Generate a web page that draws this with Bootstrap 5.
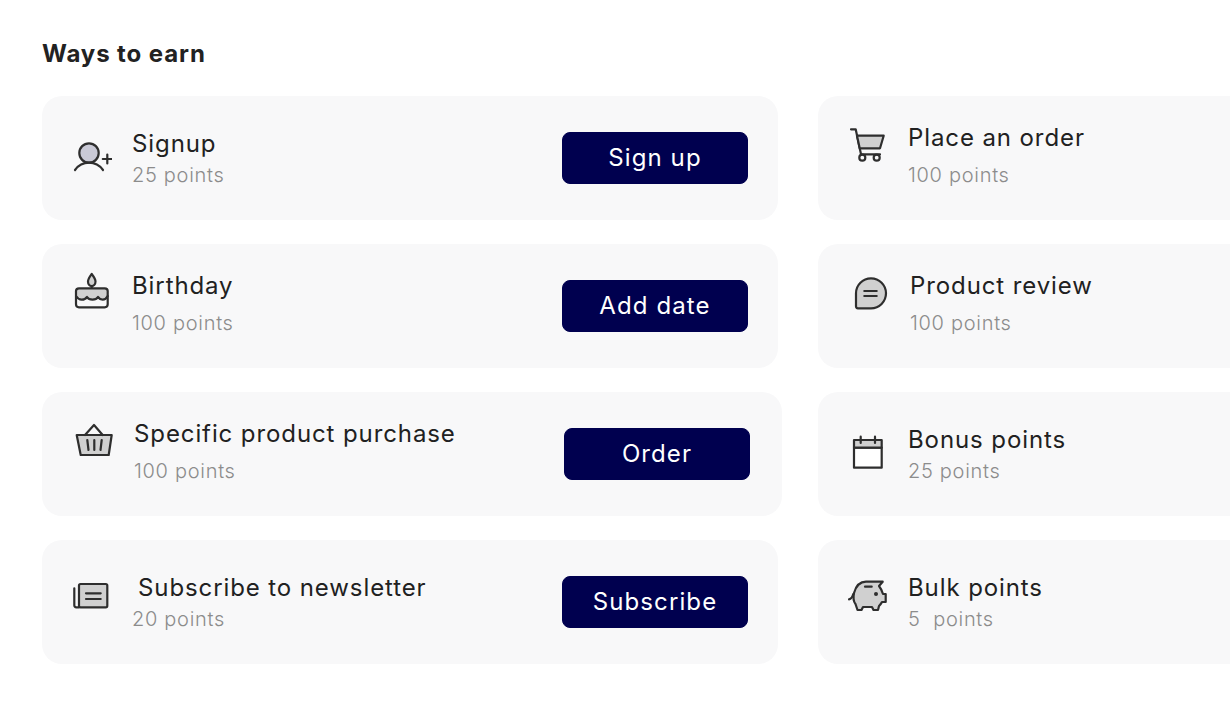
<!DOCTYPE html>
<html lang="en">
<head>
<meta charset="utf-8">
<title>Ways to earn</title>
<link href="https://cdn.jsdelivr.net/npm/bootstrap@5.3.0/dist/css/bootstrap.min.css" rel="stylesheet">
<style>
html,body{overflow:hidden;height:708px;background:#fff}
body{font-family:"Inter","Liberation Sans",sans-serif;color:#212121;padding:0 0 0 42px}
.earn-head{font-size:24px;line-height:30px;font-weight:700;letter-spacing:.9px;color:#222;padding-top:39px;margin:0 0 27px}
.earn-grid{display:grid;grid-template-columns:736px 412px;column-gap:40px;row-gap:24px;width:1188px}
.earn-card{height:124px;background:#f8f8f9;border-radius:20px;padding:0 30px}
.earn-card.wide{padding:0 32px}
.earn-card.over{margin-right:-4px}
.earn-card.cut{border-radius:20px 0 0 20px}
.ico{width:40px;height:40px;flex:none;margin-right:20px;fill:none;stroke:#2e2e2e;stroke-width:2.2;stroke-linejoin:round;stroke-linecap:round}
.ico .tone{fill:#d0d0d0}
.ico .tone-b{fill:#c9c9d6}
.ico .dot{fill:#2e2e2e;stroke:none}
.ic-hi{margin-top:28px}.ic-mid{margin-top:36px}.ic-lo{margin-top:41px}
.earn-title{font-size:24px;line-height:24px;letter-spacing:.9px;color:#212121;margin:30px 0 15px}
.earn-title.low{margin:36px 0 9px}
.earn-title.ind{padding-left:6px}
.earn-sub{font-size:20px;line-height:20px;font-weight:300;color:#8c8c8c;letter-spacing:.7px}
.earn-btn{width:186px;height:52px;flex:none;padding:0;background:#00004f;border-color:#00004f;color:#fff;font-size:24px;line-height:50px;border-radius:8px;letter-spacing:1.1px}
.earn-btn:hover{background:#00004f;border-color:#00004f;color:#fff}
</style>
</head>
<body>
<h1 class="earn-head">Ways to earn</h1>
<div class="earn-grid">

<div class="earn-card d-flex justify-content-between align-items-center">
  <div class="d-flex align-items-start h-100">
    <svg class="ico ic-lo" viewBox="0 0 40 40"><circle class="tone-b" cx="17" cy="16" r="9.700"/><path d="M3 33C7 27.500 12 25.700 17 25.700S27 27.500 31 33"/><path d="M35.300 17.500V26.500M30.800 22H39.800"/></svg>
    <div><div class="earn-title low">Signup</div><div class="earn-sub">25 points</div></div>
  </div>
  <button class="btn earn-btn" type="button">Sign up</button>
</div>
<div class="earn-card cut d-flex align-items-start">
  <svg class="ico ic-hi" viewBox="0 0 40 40"><path d="M3 5.300H7.700L13 30.300H32"/><path class="tone" d="M9 11.700H35.700L32 24.300H11.700Z"/><circle cx="14.300" cy="33.700" r="3"/><circle cx="28.700" cy="33.700" r="3"/></svg>
  <div><div class="earn-title">Place an order</div><div class="earn-sub">100 points</div></div>
</div>

<div class="earn-card d-flex justify-content-between align-items-center">
  <div class="d-flex align-items-start h-100">
    <svg class="ico ic-hi" viewBox="0 0 40 40"><path class="tone" d="M19.700 2C22 5 23.500 7 23.500 9.500C23.500 12 21.700 14 19.700 14S16 12 16 9.500C16 7 17.500 5 19.700 2Z"/><path d="M19.700 14V16.300"/><path class="tone" d="M7 16.300H32.700C34.500 16.300 35.700 17.500 35.700 19V24C33 29 28.500 28.500 26 25C24 28.500 17 28.500 15 25C12.500 28.500 7 29 4 24V19C4 17.500 5.200 16.300 7 16.300Z"/><path d="M4 24V32.300C4 34 5.300 35.300 7 35.300H32.700C34.400 35.300 35.700 34 35.700 32.300V24"/></svg>
    <div><div class="earn-title">Birthday</div><div class="earn-sub">100 points</div></div>
  </div>
  <button class="btn earn-btn" type="button">Add date</button>
</div>
<div class="earn-card wide cut d-flex align-items-start">
  <svg class="ico ic-hi" viewBox="0 0 40 40"><path class="tone" d="M6 21.300A15 15 0 1 1 21 36.300H8A2 2 0 0 1 6 34.300Z"/><path d="M14.300 19H26.700M14.300 24H26.700"/></svg>
  <div><div class="earn-title">Product review</div><div class="earn-sub">100 points</div></div>
</div>

<div class="earn-card wide over d-flex justify-content-between align-items-center">
  <div class="d-flex align-items-start h-100">
    <svg class="ico ic-hi" viewBox="0 0 40 40"><path class="tone" d="M2.700 15H37.700L34.700 35H6.700Z"/><path d="M11 15L20 5L28.700 15"/><path d="M13.300 20L14.500 30M20.300 20V30M27.700 20L26.500 30"/></svg>
    <div><div class="earn-title">Specific product purchase</div><div class="earn-sub">100 points</div></div>
  </div>
  <button class="btn earn-btn" type="button">Order</button>
</div>
<div class="earn-card cut d-flex align-items-start">
  <svg class="ico ic-lo" viewBox="0 0 40 40"><rect x="6" y="14.700" width="27.700" height="20" fill="#fff"/><path class="tone" d="M6 7H33.700V14.700H6Z"/><path d="M12.700 3.700V10M27 3.700V10"/></svg>
  <div><div class="earn-title low">Bonus points</div><div class="earn-sub">25 points</div></div>
</div>

<div class="earn-card d-flex justify-content-between align-items-center">
  <div class="d-flex align-items-start h-100">
    <svg class="ico ic-mid" viewBox="0 0 40 40"><rect class="tone" x="7" y="8" width="28.300" height="23.300" rx="1.500"/><path d="M7 31.300H4.300C3 31.300 2.300 30.500 2.300 29.300V12.300"/><path d="M14 17.300H28.700M14 23H28.700"/></svg>
    <div><div class="earn-title low ind">Subscribe to newsletter</div><div class="earn-sub">20 points</div></div>
  </div>
  <button class="btn earn-btn" type="button">Subscribe</button>
</div>
<div class="earn-card cut d-flex align-items-start">
  <svg class="ico ic-mid" viewBox="0 0 40 40"><path class="tone" d="M31 10C33 12.500 34 15 35 18H37.700V26H34C33 28 32 29 31 30L30 34H25.500L24 31H15L13.500 34H9.500L7.500 28C5 25 5 22 6 17C8 10 12 5.700 18 5.700H34.700L31 10Z"/><path d="M1 23.300C3 23 4.500 21 5.300 18"/><path d="M17 10.700H23.700"/><circle class="dot" cx="28" cy="18" r="2"/></svg>
  <div><div class="earn-title low">Bulk points</div><div class="earn-sub">5&nbsp; points</div></div>
</div>

</div>
<script src="https://cdn.jsdelivr.net/npm/bootstrap@5.3.0/dist/js/bootstrap.bundle.min.js"></script>
</body>
</html>
